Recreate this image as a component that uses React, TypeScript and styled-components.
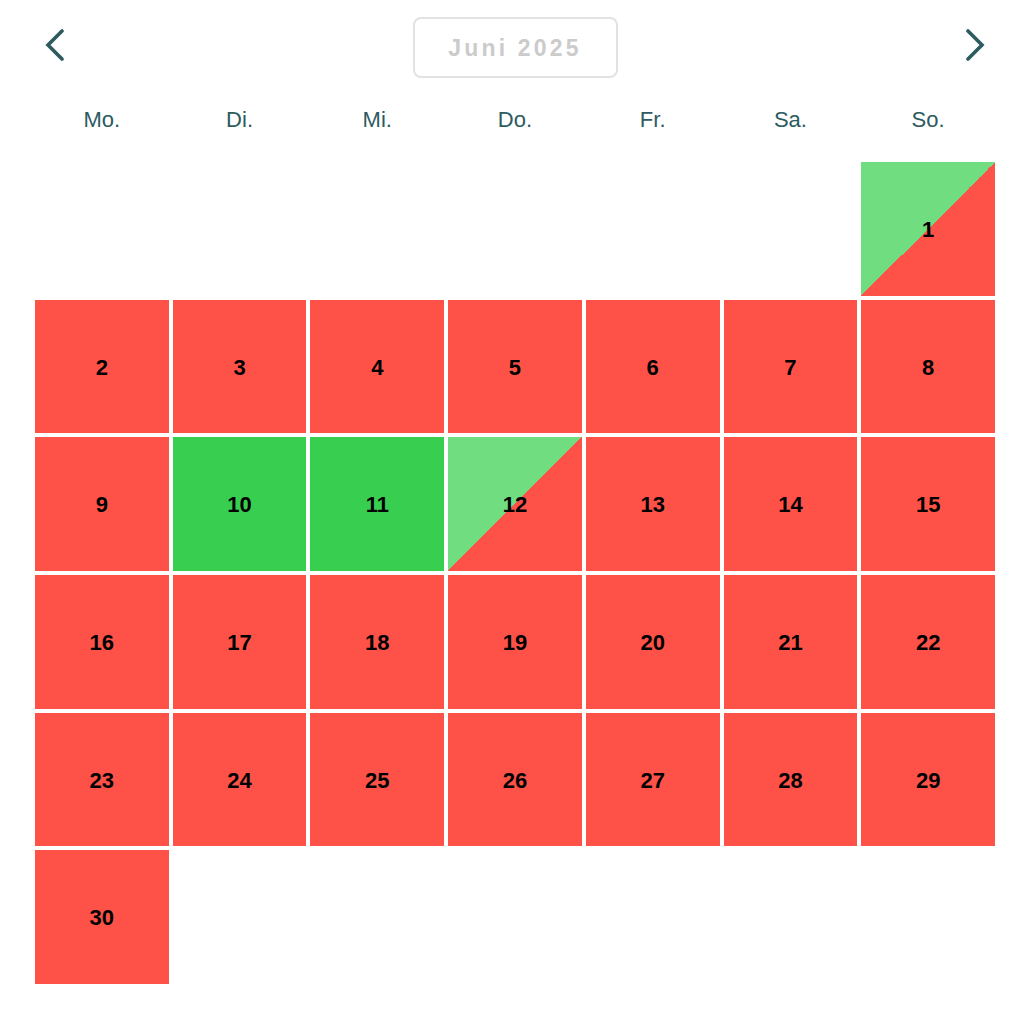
import styled, { createGlobalStyle } from "styled-components";

const GlobalStyle = createGlobalStyle`
  body {
    margin: 0;
    background: #ffffff;
    font-family: "Liberation Sans", Arial, sans-serif;
  }
`;

const RED = "#fe5249";
const GREEN = "#38cf50";
const LIGHT_GREEN = "#70dd80";

type Status = "booked" | "free" | "partial";

const Wrapper = styled.div`
  width: 960px;
  padding: 17px 0 0 35px;
`;

const Header = styled.div`
  display: flex;
  align-items: center;
  justify-content: space-between;
  height: 61px;
`;

const NavButton = styled.button`
  width: 40px;
  height: 61px;
  padding: 0 0 6px;
  border: none;
  background: none;
  display: flex;
  align-items: center;
  justify-content: center;
  cursor: pointer;
  color: #2d5b5f;
`;

const MonthButton = styled.button`
  width: 205px;
  height: 61px;
  border: 2px solid #e2e2e2;
  border-radius: 8px;
  background: #ffffff;
  color: #cbcbcb;
  font-family: "Liberation Sans", Arial, sans-serif;
  font-weight: bold;
  font-size: 23px;
  letter-spacing: 3.2px;
  padding: 2px 0 0;
`;

const Weekdays = styled.div`
  display: grid;
  grid-template-columns: repeat(7, 1fr);
  gap: 4px;
  margin-top: 29px;
`;

const Weekday = styled.div`
  text-align: center;
  font-size: 22px;
  line-height: 26px;
  color: #2d5b5f;
`;

const Days = styled.div`
  display: grid;
  grid-template-columns: repeat(7, 1fr);
  grid-auto-rows: 133.7px;
  gap: 4px;
  margin-top: 29px;
`;

const Day = styled.div<{ $status: Status; $start?: number }>`
  display: flex;
  align-items: center;
  justify-content: center;
  padding-top: 2px;
  font-size: 22px;
  font-weight: bold;
  color: #000000;
  grid-column-start: ${(p) => p.$start ?? "auto"};
  background: ${(p) =>
    p.$status === "free"
      ? GREEN
      : p.$status === "partial"
      ? `linear-gradient(to bottom right, ${LIGHT_GREEN} 50%, ${RED} 50%)`
      : RED};
`;

const Chevron = ({ dir }: { dir: "left" | "right" }) => (
  <svg width="20" height="32" viewBox="0 0 20 32" fill="none">
    <polyline
      points={dir === "left" ? "17,2 3,16 17,30" : "3,2 17,16 3,30"}
      stroke="currentColor"
      strokeWidth="3.6"
      strokeLinecap="round"
      strokeLinejoin="miter"
    />
  </svg>
);

const weekdays = ["Mo.", "Di.", "Mi.", "Do.", "Fr.", "Sa.", "So."];

const statusFor = (d: number): Status => {
  if (d === 10 || d === 11) return "free";
  if (d === 1 || d === 12) return "partial";
  return "booked";
};

export default function App() {
  const days = Array.from({ length: 30 }, (_, i) => i + 1);
  return (
    <>
      <GlobalStyle />
      <Wrapper>
        <Header>
          <NavButton aria-label="Vorheriger Monat">
            <Chevron dir="left" />
          </NavButton>
          <MonthButton>Juni 2025</MonthButton>
          <NavButton aria-label="Nächster Monat">
            <Chevron dir="right" />
          </NavButton>
        </Header>
        <Weekdays>
          {weekdays.map((w) => (
            <Weekday key={w}>{w}</Weekday>
          ))}
        </Weekdays>
        <Days>
          {days.map((d) => (
            <Day key={d} $status={statusFor(d)} $start={d === 1 ? 7 : undefined}>
              {d}
            </Day>
          ))}
        </Days>
      </Wrapper>
    </>
  );
}
